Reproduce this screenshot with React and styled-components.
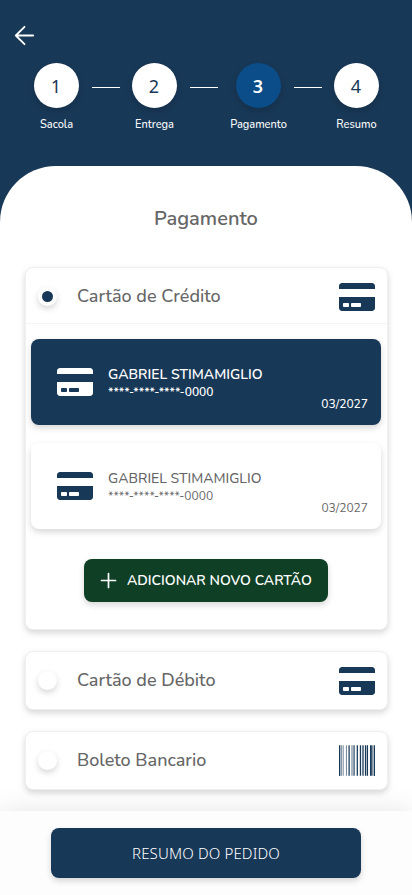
import React from "react";
import styled, { createGlobalStyle } from "styled-components";
import { FaCreditCard, FaBarcode } from "react-icons/fa";

const navy = "#183857";
const grey = "#666666";

const GlobalStyle = createGlobalStyle`
  *, *::before, *::after { box-sizing: border-box; }
  html, body { margin: 0; height: 100%; overflow: hidden; }
  body { background: ${navy}; font-family: "Nunito", "Lato", sans-serif; color: ${grey}; }
  button { font-family: inherit; border: 0; padding: 0; }
`;

const Screen = styled.div`
  display: flex;
  flex-direction: column;
  width: 412px;
  height: 895px;
  overflow: hidden;
  background: ${navy};
`;

const Header = styled.header`
  flex: none;
  height: 166px;
  padding-top: 25px;
`;

const BackButton = styled.button`
  display: block;
  width: 21px;
  height: 21px;
  margin-left: 14px;
  background: none;
  color: #fff;
  svg { display: block; }
`;

const Stepper = styled.nav`
  display: flex;
  align-items: flex-start;
  margin-top: 17px;
  padding-left: 34px;
`;

const Step = styled.div`
  display: flex;
  flex: none;
  flex-direction: column;
  align-items: center;
  width: 45px;
`;

const StepCircle = styled.div`
  display: flex;
  align-items: center;
  justify-content: center;
  width: 45px;
  height: 45px;
  padding: 1px 1px 0 0;
  border-radius: 50%;
  background: ${(p) => (p.$active ? "#0b4d88" : "#fff")};
  color: ${(p) => (p.$active ? "#fff" : navy)};
  font: ${(p) => (p.$active ? 600 : 400)} 18px/24px "Noto Sans", sans-serif;
  box-shadow: 0 3px 6px rgba(0, 0, 0, 0.16);
`;

const StepLabel = styled.span`
  margin-top: 9px;
  color: #fff;
  font-size: 11px;
  font-weight: 500;
  line-height: 15px;
  white-space: nowrap;
`;

const StepLine = styled.span`
  flex: none;
  width: 28px;
  height: 1px;
  margin: 24px ${(p) => p.$after}px 0 13px;
  background: #fff;
`;

const Sheet = styled.main`
  flex: 1;
  min-height: 0;
  padding: 39px 24px 0 25px;
  border-radius: 56px 56px 0 0;
  background: #fff;
`;

const Title = styled.h1`
  margin: 0 1px 35px 0;
  font-size: 20px;
  font-weight: 560;
  line-height: 27px;
  text-align: center;
`;

const Method = styled.section`
  height: ${(p) => (p.$open ? 363 : 59)}px;
  margin-bottom: 21px;
  border: 1px solid #f0f0f0;
  border-radius: 8px;
  background: #fff;
  box-shadow: 0 3px 6px rgba(0, 0, 0, 0.16);
`;

const MethodRow = styled.div`
  display: flex;
  align-items: center;
  height: ${(p) => (p.$open ? 56 : 57)}px;
  padding: ${(p) => (p.$open ? 2 : 0)}px 12px 0;
  border-bottom: ${(p) => (p.$open ? "1px solid #f5f5f5" : "0")};
`;

const Radio = styled.span`
  display: flex;
  align-items: center;
  justify-content: center;
  width: 19px;
  height: 19px;
  border-radius: 50%;
  background: #fff;
  box-shadow: 0 3px 6px rgba(0, 0, 0, 0.16);
  &::after {
    content: "";
    width: 11px;
    height: 11px;
    border-radius: 50%;
    background: ${(p) => (p.$checked ? navy : "transparent")};
  }
`;

const MethodName = styled.span`
  flex: 1;
  margin: 0 0 2px 20px;
  font-size: 18px;
  font-weight: 550;
  line-height: 24px;
`;

const CardIcon = styled(FaCreditCard)`
  display: block;
  flex: none;
  width: 36px;
  height: 32px;
`;

const BarcodeIcon = styled(FaBarcode)`
  display: block;
  flex: none;
  width: 36px;
  height: 41px;
  color: ${navy};
`;

const SavedCards = styled.div`
  display: flex;
  flex-direction: column;
  align-items: center;
  padding: 15px 6px 0 5px;
`;

const SavedCard = styled.div`
  display: flex;
  align-items: center;
  width: 350px;
  height: 86px;
  margin-bottom: 18px;
  padding: 0 13px 0 26px;
  border-radius: 8px;
  background: ${(p) => (p.$selected ? navy : "#fff")};
  color: ${(p) => (p.$selected ? "#fff" : grey)};
  box-shadow: 0 3px 6px rgba(0, 0, 0, 0.16);
  svg { color: ${(p) => (p.$selected ? "#fff" : navy)}; }
`;

const CardInfo = styled.div`
  flex: 1;
  margin-left: 15px;
`;

const Holder = styled.div`
  font-size: 14px;
  font-weight: ${(p) => (p.$selected ? 560 : 500)};
  line-height: 19px;
  white-space: nowrap;
`;

const Digits = styled.div`
  font-size: 12px;
  font-weight: ${(p) => (p.$selected ? 600 : 400)};
  line-height: 16px;
  white-space: nowrap;
`;

const Expiry = styled.div`
  align-self: flex-end;
  margin-bottom: 13px;
  font-size: 12px;
  font-weight: ${(p) => (p.$selected ? 550 : 450)};
  line-height: 16px;
`;

const AddButton = styled.button`
  display: flex;
  align-items: center;
  width: 244px;
  height: 43px;
  margin-top: 12px;
  padding-left: 16px;
  border-radius: 8px;
  background: #0f4026;
  color: #fff;
  font-size: 14px;
  font-weight: 600;
  white-space: nowrap;
  box-shadow: 0 3px 6px rgba(0, 0, 0, 0.16);
  svg { flex: none; margin-right: 10px; }
`;

const Footer = styled.footer`
  position: relative;
  display: flex;
  flex: none;
  justify-content: center;
  height: 84px;
  padding-top: 17px;
  background: #fdfdfd;
  box-shadow: 0 3px 30px rgba(0, 0, 0, 0.13);
`;

const SummaryButton = styled.button`
  width: 310px;
  height: 50px;
  border-radius: 8px;
  background: ${navy};
  color: #fff;
  font-family: "Noto Sans", sans-serif;
  font-size: 15px;
  font-weight: 300;
  letter-spacing: 0.15px;
  box-shadow: 0 3px 6px rgba(0, 0, 0, 0.16);
`;

const steps = [
  { label: "Sacola", after: 12 },
  { label: "Entrega", after: 18 },
  { label: "Pagamento", after: 12, active: true },
  { label: "Resumo" },
];

const savedCards = [
  { selected: true, holder: "GABRIEL STIMAMIGLIO", digits: "****-****-****-0000", expiry: "03/2027" },
  { selected: false, holder: "GABRIEL STIMAMIGLIO", digits: "****-****-****-0000", expiry: "03/2027" },
];

function BackArrow() {
  return (
    <svg width="21" height="21" viewBox="0 0 21 21" fill="none" stroke="currentColor" strokeWidth="1.8" strokeLinecap="round" strokeLinejoin="round">
      <path d="M10.500 1.800 1.800 10.500l8.700 8.700M1.800 10.500h17.400" />
    </svg>
  );
}

function PlusIcon() {
  return (
    <svg width="17" height="17" viewBox="0 0 17 17" fill="none" stroke="currentColor" strokeWidth="1.7" strokeLinecap="round">
      <path d="M8.500 1.500v14M1.500 8.500h14" />
    </svg>
  );
}

export default function App() {
  return (
    <>
      <GlobalStyle />
      <Screen>
        <Header>
          <BackButton aria-label="Voltar"><BackArrow /></BackButton>
          <Stepper>
            {steps.map((s, i) => (
              <React.Fragment key={s.label}>
                <Step>
                  <StepCircle $active={s.active}>{i + 1}</StepCircle>
                  <StepLabel>{s.label}</StepLabel>
                </Step>
                {s.after && <StepLine $after={s.after} />}
              </React.Fragment>
            ))}
          </Stepper>
        </Header>
        <Sheet>
          <Title>Pagamento</Title>
          <Method $open>
            <MethodRow $open>
              <Radio $checked />
              <MethodName>Cartão de Crédito</MethodName>
              <CardIcon color={navy} />
            </MethodRow>
            <SavedCards>
              {savedCards.map((c, i) => (
                <SavedCard key={i} $selected={c.selected}>
                  <CardIcon />
                  <CardInfo>
                    <Holder $selected={c.selected}>{c.holder}</Holder>
                    <Digits $selected={c.selected}>{c.digits}</Digits>
                  </CardInfo>
                  <Expiry $selected={c.selected}>{c.expiry}</Expiry>
                </SavedCard>
              ))}
              <AddButton><PlusIcon />ADICIONAR NOVO CARTÃO</AddButton>
            </SavedCards>
          </Method>
          <Method>
            <MethodRow>
              <Radio />
              <MethodName>Cartão de Débito</MethodName>
              <CardIcon color={navy} />
            </MethodRow>
          </Method>
          <Method>
            <MethodRow>
              <Radio />
              <MethodName>Boleto Bancario</MethodName>
              <BarcodeIcon preserveAspectRatio="none" />
            </MethodRow>
          </Method>
        </Sheet>
        <Footer>
          <SummaryButton>RESUMO DO PEDIDO</SummaryButton>
        </Footer>
      </Screen>
    </>
  );
}
